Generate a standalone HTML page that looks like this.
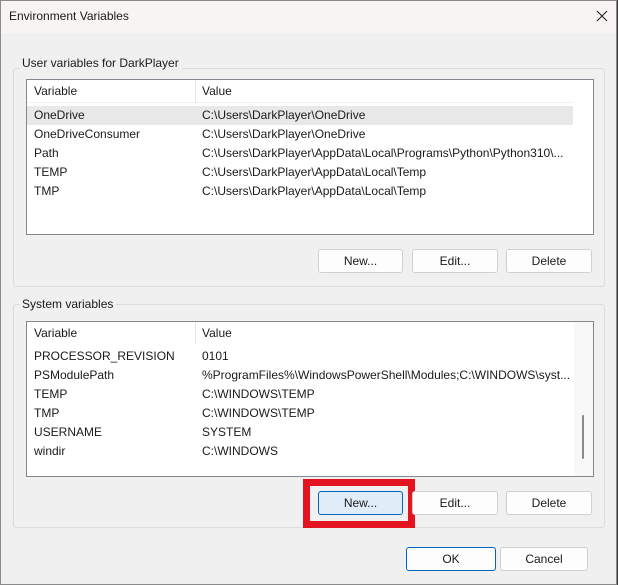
<!DOCTYPE html><html><head><style>
*{margin:0;padding:0;box-sizing:border-box}
body{width:618px;height:585px;background:#3a3a3a;font-family:"Liberation Sans",sans-serif;font-size:12px;color:#1a1a1a;position:relative;overflow:hidden}
.win{position:absolute;left:0;top:0;width:617px;height:585px;background:#f0f0f0;border:1px solid #8a8a8a}
.title{position:absolute;left:0;top:0;width:100%;height:32px;background:#f9f4f4}
.abs{position:absolute}
.grp{position:absolute;border:1px solid #dcdcdc;border-radius:3px}
.lbl{position:absolute;background:#f0f0f0;padding:0 3px 0 2px;line-height:14px}
.list{position:absolute;background:#fff;border:1px solid #828790}
.hdr{position:absolute;left:0;top:0;height:23px;line-height:22px;background:#fff}
.row{position:absolute;left:0;height:19px;line-height:19px;width:546px}
.c1{position:absolute;left:7px}.c2{position:absolute;left:175px;white-space:nowrap}
.btn{position:absolute;height:24px;background:#fdfdfd;border:1px solid #d0d0d0;border-radius:3px;text-align:center;line-height:22px}
</style></head><body>
<div class="win">
<div class="title"></div>
<div class="abs" style="left:8px;top:8px;font-size:12px">Environment Variables</div>
<svg class="abs" style="left:595px;top:9px" width="12" height="12" viewBox="0 0 12 12"><path d="M1 1L11 11M11 1L1 11" stroke="#222" stroke-width="1.1"/></svg>

<div class="grp" style="left:12px;top:67px;width:592px;height:219px"></div>
<div class="lbl" style="left:19px;top:55px">User variables for DarkPlayer</div>
<div class="list" style="left:25px;top:78px;width:568px;height:156px">
 <div class="hdr" style="width:546px;border-bottom:1px solid #f0f0f0"><span class="c1">Variable</span><span class="c2">Value</span><div class="abs" style="left:168px;top:0;width:1px;height:22px;background:#e5e5e5"></div></div>
 <div class="row" style="top:26px;background:#e8e8e8"><span class="c1">OneDrive</span><span class="c2">C:\Users\DarkPlayer\OneDrive</span></div>
 <div class="row" style="top:45px"><span class="c1">OneDriveConsumer</span><span class="c2">C:\Users\DarkPlayer\OneDrive</span></div>
 <div class="row" style="top:64px"><span class="c1">Path</span><span class="c2">C:\Users\DarkPlayer\AppData\Local\Programs\Python\Python310\...</span></div>
 <div class="row" style="top:83px"><span class="c1">TEMP</span><span class="c2">C:\Users\DarkPlayer\AppData\Local\Temp</span></div>
 <div class="row" style="top:102px"><span class="c1">TMP</span><span class="c2">C:\Users\DarkPlayer\AppData\Local\Temp</span></div>
</div>
<div class="btn" style="left:317px;top:248px;width:85px">New...</div>
<div class="btn" style="left:411px;top:248px;width:86px">Edit...</div>
<div class="btn" style="left:505px;top:248px;width:86px">Delete</div>

<div class="grp" style="left:12px;top:303px;width:592px;height:224px"></div>
<div class="lbl" style="left:19px;top:296px">System variables</div>
<div class="list" style="left:25px;top:320px;width:568px;height:156px">
 <div class="hdr" style="width:546px"><span class="c1">Variable</span><span class="c2">Value</span><div class="abs" style="left:168px;top:0;width:1px;height:22px;background:#e5e5e5"></div></div>
 <div class="abs" style="left:547px;top:0;width:19px;height:154px;background:#f8f8f8"></div>
 <div class="abs" style="left:555px;top:93px;width:2px;height:44px;background:#8a8a8a;border-radius:1px"></div>
 <div class="row" style="top:25px"><span class="c1">PROCESSOR_REVISION</span><span class="c2">0101</span></div>
 <div class="row" style="top:44px"><span class="c1">PSModulePath</span><span class="c2">%ProgramFiles%\WindowsPowerShell\Modules;C:\WINDOWS\syst...</span></div>
 <div class="row" style="top:63px"><span class="c1">TEMP</span><span class="c2">C:\WINDOWS\TEMP</span></div>
 <div class="row" style="top:82px"><span class="c1">TMP</span><span class="c2">C:\WINDOWS\TEMP</span></div>
 <div class="row" style="top:101px"><span class="c1">USERNAME</span><span class="c2">SYSTEM</span></div>
 <div class="row" style="top:120px"><span class="c1">windir</span><span class="c2">C:\WINDOWS</span></div>
</div>
<div class="abs" style="left:302px;top:478px;width:112px;height:49px;border:7px solid #e3141f"></div>
<div class="btn" style="left:317px;top:490px;width:85px;background:#e0ecf8;border-color:#0067c0">New...</div>
<div class="btn" style="left:411px;top:490px;width:86px">Edit...</div>
<div class="btn" style="left:505px;top:490px;width:86px">Delete</div>

<div class="btn" style="left:405px;top:546px;width:90px;border-color:#0067c0">OK</div>
<div class="btn" style="left:499px;top:546px;width:88px">Cancel</div>
</div>
</body></html>
